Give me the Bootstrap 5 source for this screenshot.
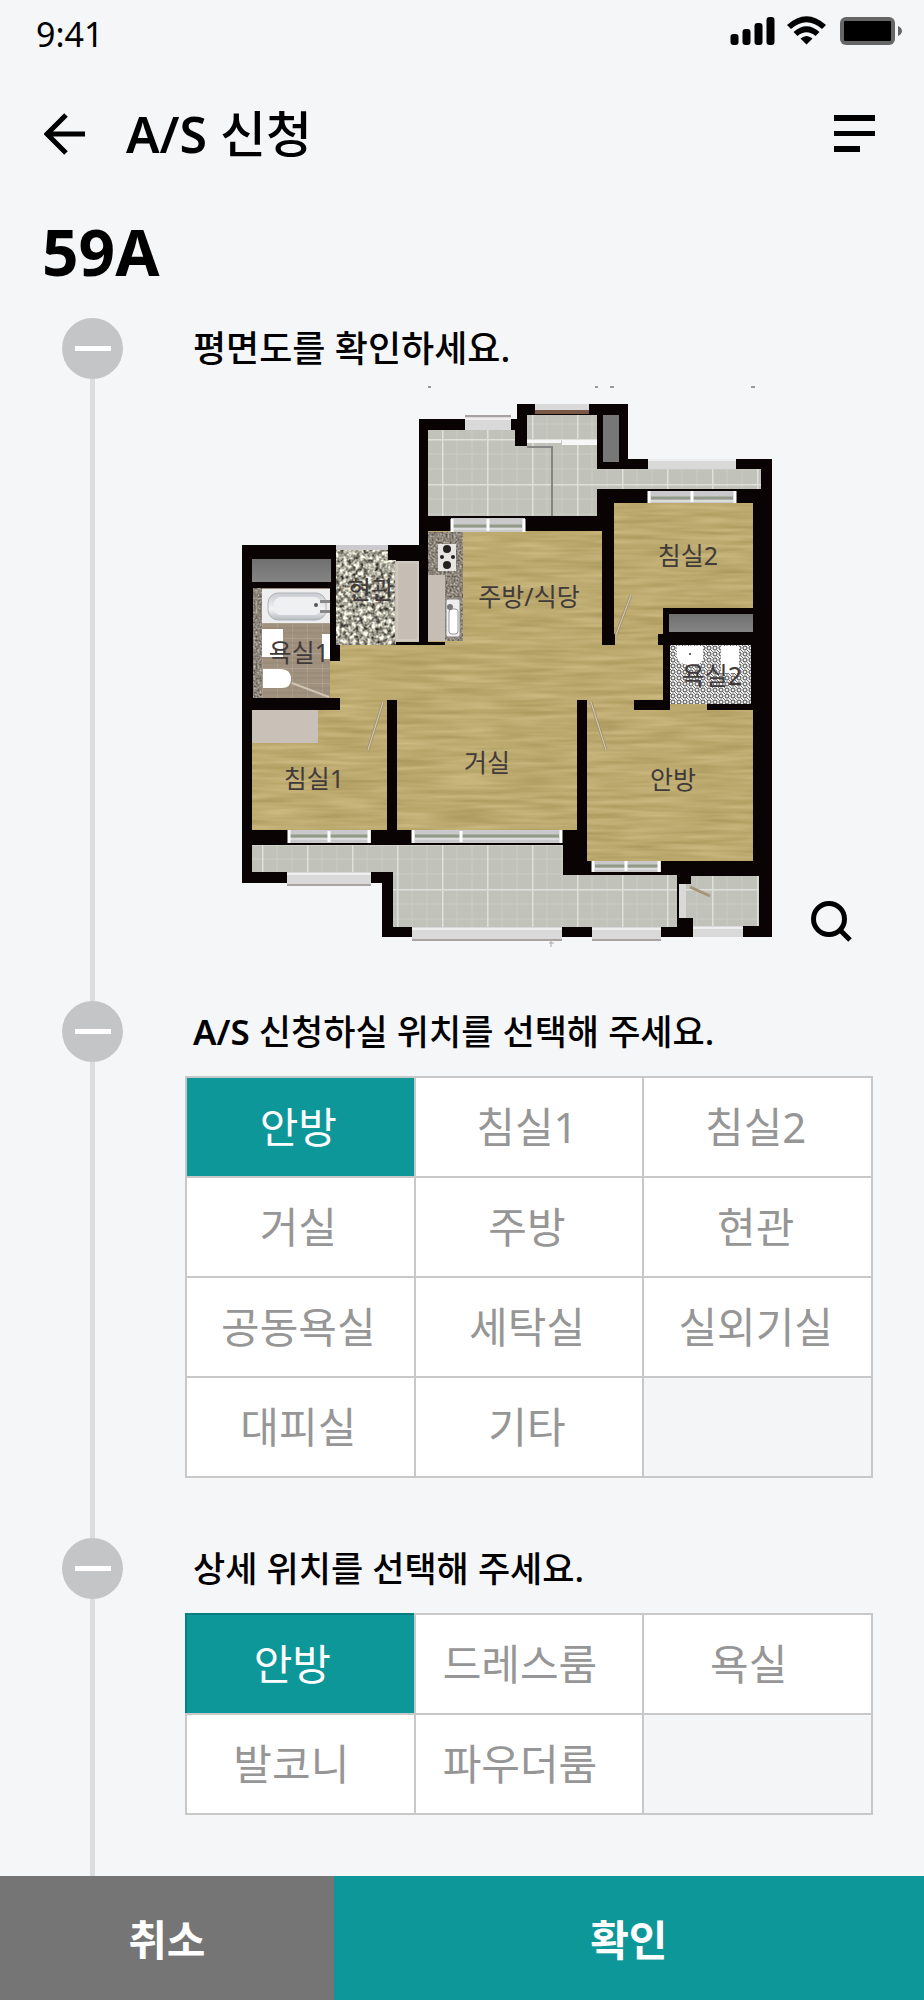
<!DOCTYPE html>
<html lang="ko">
<head>
<meta charset="utf-8">
<meta name="viewport" content="width=device-width, initial-scale=1">
<title>A/S 신청</title>
<link href="https://cdn.jsdelivr.net/npm/bootstrap@5.3.0/dist/css/bootstrap.min.css" rel="stylesheet">
<style>
  :root { --teal: #0e9799; --line: #c8c8c8; --page: #f5f6f8; }
  body { background: var(--page); color: #000; font-family: "Noto Sans", "Noto Sans CJK KR", sans-serif; }
  svg { display: block; }
  .status-bar { height: 68px; padding: 0 22px 0 36px; font-size: 34px; line-height: 68px; }
  .app-header { height: 132px; padding: 0 49px 0 44px; }
  .app-title { margin-left: 41px; font-size: 50px; line-height: 60px; font-weight: 500; }
  .icon-btn { padding: 0; border: 0; background: none; color: #000; }
  .unit-type { padding: 18px 42px 0; margin-bottom: 32px; font-size: 64px; line-height: 68px; font-weight: 700; }
  .steps { padding: 0 51px 0 62px; }
  .step-row { gap: 62px; }
  .step-toggle { width: 61px; height: 61px; border: 0; padding: 0; border-radius: 50%; background: #c4c5c7; }
  .step-toggle span { width: 36px; height: 5px; background: #fff; }
  .step-line { width: 5px; background: #dcdddf; }
  .step-content { min-width: 0; padding-bottom: 60px; }
  .step-title { height: 61px; padding-left: 8px; font-size: 36px; line-height: 61px; font-weight: 500; }
  .choice-title { font-size: 35px; }
  .plan-box { margin-bottom: -21px; }
  .zoom-btn { right: 21px; bottom: 20px; }
  .choices { display: grid; grid-template-columns: repeat(3, 1fr); gap: 2px; padding: 2px; margin-top: 14px; background: var(--line); }
  .choice { height: 98px; padding-right: 4px; background: #fff; color: #969696; font-size: 42px; line-height: 60px; cursor: pointer; }
  .choice-empty { background: #f4f5f7; }
  .btn-check:checked + .choice { background: var(--teal); color: #fff; }
  .btn-check:focus-visible + .choice { box-shadow: inset 0 0 0 4px #076a6c; }
  .choices-detail .choice { padding-right: 18px; }
  .choices-detail .btn-check:checked + .choice { margin: -2px 0 0 -2px; padding-right: 16px; height: 100px; border: solid #087e80; border-width: 2px 0 0 2px; }
  .action-bar button { height: 124px; border: 0; padding: 4px 0 0; color: #fff; font-size: 42px; line-height: 60px; font-weight: 700; }
  .cancel-btn { flex: 13 1 0; background: #757575; }
  .confirm-btn { flex: 23 1 0; background: var(--teal); }
  .room-name { font-size: 25px; fill: #403a3a; text-anchor: middle; }
</style>
</head>
<body>
<div class="min-vh-100 d-flex flex-column">
  <div class="status-bar d-flex justify-content-between">
    <span>9:41</span>
    <svg class="mt-3" width="172" height="30" viewBox="730 16 172 30" aria-hidden="true">
      <rect x="730.500" y="34" width="8" height="11" rx="3"/><rect x="742.500" y="29" width="8" height="16" rx="3"/><rect x="754.500" y="23" width="8" height="22" rx="3"/><rect x="766.500" y="17" width="8" height="28" rx="3"/>
      <path d="M787 25Q806.500 7.500 826 25L822 29Q806.500 15.500 791 29ZM793.500 32Q806.500 20.500 819.500 32L815.500 36Q806.500 28.500 797.500 36ZM800.500 38.500Q806.500 33.500 812.500 38.500L806.500 44.500Z"/>
      <rect x="840" y="17" width="55" height="28" rx="6" fill="#666"/><rect x="844" y="21" width="47" height="20" rx="1"/><path d="M898 26q4 2 4 5t-4 5z" fill="#666"/>
    </svg>
  </div>

  <header class="app-header d-flex align-items-center">
    <button class="icon-btn" type="button" aria-label="뒤로">
      <svg width="41" height="42" viewBox="0 0 41 42" fill="none" stroke="#000" stroke-width="5"><path d="M22 2 3 21 22 40M3 21H41"/></svg>
    </button>
    <h1 class="app-title mb-0"><span class="fw-semibold">A/S</span> 신청</h1>
    <button class="icon-btn ms-auto" type="button" aria-label="메뉴">
      <svg width="41" height="38" viewBox="0 0 41 38"><path d="M0 0h41v6H0zM0 16h41v5H0zM0 31h26v6H0z"/></svg>
    </button>
  </header>

  <main class="flex-grow-1 d-flex flex-column">
    <h2 class="unit-type">59A</h2>
    <div class="steps flex-grow-1 d-flex flex-column">

      <section class="step-row d-flex">
        <div class="d-flex flex-column align-items-center">
          <button class="step-toggle d-flex align-items-center justify-content-center flex-shrink-0" type="button" aria-label="접기"><span></span></button>
          <div class="step-line flex-grow-1"></div>
        </div>
        <div class="step-content flex-grow-1">
          <h3 class="step-title mb-0">평면도를 확인하세요.</h3>
          <div class="plan-box position-relative">
            <svg width="100%" viewBox="185 379 688 583" role="img" aria-label="59A 평면도">
              <defs>
                <filter id="wood" x="0" y="0" width="1" height="1" color-interpolation-filters="sRGB">
                  <feTurbulence type="fractalNoise" baseFrequency=".016 .2" numOctaves="2" seed="4"/>
                  <feColorMatrix values=".18 0 0 0 .65  .18 0 0 0 .575  .2 0 0 0 .335  0 0 0 0 1"/>
                </filter>
                <filter id="granite" x="0" y="0" width="1" height="1" color-interpolation-filters="sRGB">
                  <feTurbulence type="fractalNoise" baseFrequency=".25" numOctaves="2" seed="8"/>
                  <feColorMatrix values="1.6 0 0 0 -.14  1.6 0 0 0 -.15  1.5 0 0 0 -.15  0 0 0 0 1"/>
                </filter>
                <filter id="counter" x="0" y="0" width="1" height="1" color-interpolation-filters="sRGB">
                  <feTurbulence type="fractalNoise" baseFrequency=".5" numOctaves="2" seed="3"/>
                  <feColorMatrix values=".7 0 0 0 .2  .7 0 0 0 .17  .7 0 0 0 .13  0 0 0 0 1"/>
                </filter>
                <clipPath id="wood-rooms">
                  <path d="M252 710H340V645H428V531H602V645H614V503H753V608H663V700H634V710H670V704H707V710H753V861H587V700H577V830H397V700H387V830H252ZM329 661H341V698H329ZM340 698H384V711H340ZM591 698H634V711H591Z"/>
                </clipPath>
                <pattern id="tile" x="442" y="439" width="45" height="45" patternUnits="userSpaceOnUse">
                  <rect width="45" height="45" fill="#c1c3ba"/>
                  <path d="M15 0V45M30 0V45M0 15H45M0 30H45" stroke="#cbcdc5"/>
                  <path d="M.5 0V45M0 .5H45" stroke="#dfe0db" stroke-width="2"/>
                </pattern>
                <pattern id="mosaic" x="670" y="645" width="6" height="6" patternUnits="userSpaceOnUse">
                  <rect width="6" height="6" fill="#eee"/><circle cx="3" cy="3" r="2" fill="none" stroke="#444" stroke-width="1"/><circle r="1" fill="#444"/><circle cx="6" cy="6" r="1" fill="#444"/>
                </pattern>
                <pattern id="bathfloor" x="262" y="623" width="15" height="15" patternUnits="userSpaceOnUse">
                  <rect width="15" height="15" fill="#a0917f"/><path d="M0 0H15M0 0V15" stroke="#b8ab9c"/><path d="M0 5H15M0 10H15" stroke="#978775"/>
                </pattern>
                <linearGradient id="shaft" x2="0" y2="1"><stop stop-color="#707070"/><stop offset="1" stop-color="#858585"/></linearGradient>
                <linearGradient id="tub" x2="0" y2="1"><stop stop-color="#c7cbd0"/><stop offset=".6" stop-color="#f2f4f6"/><stop offset="1" stop-color="#b5babf"/></linearGradient>
              </defs>
              <path d="M428 386h3v2h-3zM595 386h3v2h-3zM610 386h4v2h-4zM751 386h4v2h-4z" fill="#999"/>
              <!-- outer walls -->
              <path d="M242 545H419V419H517V404H628V459H772V937H382V883H242Z" fill="#090303"/>
              <!-- wooden floors -->
              <g clip-path="url(#wood-rooms)"><rect x="242" y="490" width="520" height="380" filter="url(#wood)"/></g>
              <path d="M602 489H613V634H615V645H602ZM419 531H428V645H419ZM397 642H445V645H397ZM658 634H664V645H658Z" fill="#090303"/>
              <path d="M564 830H578V862H564Z" fill="#090303"/>
              <!-- tiled floors -->
              <g fill="url(#tile)">
                <path d="M428 430H515V446H527V415H597V469H761V489H597V516H428Z"/>
                <path d="M252 845H563V875H677V927H393V872H252ZM686 876H759V926H686Z"/>
              </g>
              <path d="M597 404H628V469H597Z" fill="#090303"/>
              <path d="M552 446V516" stroke="#85877f" stroke-width="2"/><path d="M527 447H551" stroke="#888" stroke-width="2"/>
              <path d="M527 440H562V445H597V440H561V443H527Z" fill="#f7f7f7"/>
              <!-- shafts -->
              <path d="M252 559H331V582H252Z" fill="url(#shaft)"/><path d="M603 415H619V462H603Z" fill="#777"/><path d="M669 614H753V632H669Z" fill="url(#shaft)"/>
              <!-- entrance -->
              <path d="M336 550H396V645H336Z" filter="url(#granite)"/>
              <path d="M336 545H388V550H336Z" fill="#c9c9ce"/><path d="M388 545H419V560H388Z" fill="#090303"/>
              <path d="M395 561H419V642H395Z" fill="#c6beb4"/><path d="M397 562H418V640H397Z" fill="none" stroke="#d9d3c9"/>
              <!-- bathroom 1 -->
              <path d="M253 588H330V698H253Z" fill="url(#bathfloor)"/>
              <path d="M253 588H262V698H253Z" filter="url(#counter)"/>
              <path d="M262 589H330V623H262Z" fill="#eee"/><rect x="268" y="593" width="58" height="27" rx="10" fill="url(#tub)" stroke="#aeb3b8"/><rect x="274" y="597" width="47" height="18" rx="7" fill="#eef0f2"/><circle cx="316" cy="605" r="2" fill="#555"/><path d="M320 600h10v3h-10zM320 610h10v3h-10z" fill="#888"/>
              <path d="M262 629H283V657H262ZM322 634H330V659H322Z" fill="#fff"/><path d="M263 669H280Q291 669 291 679T280 688H263Z" fill="#fff"/><path d="M292 683 329 697" stroke="#d0c4b3" stroke-width="2"/>
              <!-- kitchen -->
              <path d="M428 532H463V641H428Z" filter="url(#counter)"/>
              <path d="M438 544H456V571H438Z" fill="#e7e4e2"/><g fill="#252020"><circle cx="447" cy="549" r="4"/><circle cx="447" cy="565" r="4"/><circle cx="442" cy="557" r="2"/><circle cx="453" cy="557" r="2"/></g>
              <path d="M428 575H445V641H428Z" fill="#c6beb4"/><rect x="446" y="599" width="14" height="38" rx="2" fill="#eee" stroke="#8b8580"/><rect x="449" y="609" width="9" height="25" rx="3" fill="#fff" stroke="#999"/><circle cx="450" cy="607" r="3" fill="#777"/>
              <!-- bathroom 2 -->
              <path d="M670 645H751V704H670Z" fill="url(#mosaic)"/><path d="M677 646H703V659Q701 665 690 665T677 658ZM721 646H739V673H721Z" fill="#fff"/><circle cx="690" cy="654" r="1" fill="#333"/>
              <path d="M252 710H318V743H252Z" fill="#c9c0b8"/>
              <!-- windows -->
              <g fill="#d9d9d9">
                <path d="M465 415H511V430H465ZM535 404H589V410H535ZM648 459H736V469H648Z"/>
                <path d="M287 872H371V886H287ZM412 927H562V941H412ZM592 927H661V941H592ZM693 926H743V937H693ZM679 884H686V918H679Z"/>
              </g>
              <path d="M465 416H511M287 885H371M412 940H562M592 940H661" stroke="#a8a2a0" stroke-width="2"/>
              <path d="M465 419H511M287 874H371M412 929H562M592 929H661M693 928H743M648 460H736" stroke="#eee" stroke-width="2"/>
              <path d="M535 410H589V414H535Z" fill="#795846"/>
              <path d="M677 875H691V884H677ZM677 918H693V937H677Z" fill="#090303"/>
              <path d="M451 518H525V532H451ZM648 491H736V503H648ZM288 830H371V843H288ZM412 830H562V843H412ZM592 861H661V872H592Z" fill="#c9c9cb"/>
              <path d="M453 526H522M651 498H733M290 836H368M415 836H559M595 866H658" stroke="#929a88" stroke-width="3"/>
              <path d="M453 529H522M651 501H733M290 839H368M415 839H559M595 869H658" stroke="#eee"/>
              <path d="M452 519V532M488 519V531M524 519V532M649 491V503M692 491V502M735 491V503M289 830V843M329 831V842M369 830V843M413 830V843M461 831V842M561 830V843M593 861V872M626 861V871M659 861V872" stroke="#fff" stroke-width="3"/>
              <!-- doors -->
              <path d="M631 595 616 635M383 702 368 750M591 702 606 750M690 887 710 896" stroke="#a39575" stroke-width="3"/>
              <path d="M631 595 616 635M383 702 368 750M591 702 606 750" stroke="#d8ccb2"/>
              <path d="M551 941V947M549 943H554" stroke="#aaa"/>
              <g class="room-name">
                <text x="688" y="565">침실2</text><text x="529" y="606">주방/식당</text><text x="371" y="599">현관</text><text x="299" y="662">욕실1</text>
                <text x="314" y="788">침실1</text><text x="487" y="772">거실</text><text x="673" y="789">안방</text><text x="712" y="685">욕실2</text>
              </g>
            </svg>
            <button class="icon-btn zoom-btn position-absolute" type="button" aria-label="평면도 확대">
              <svg width="41" height="41" viewBox="0 0 41 41" fill="none" stroke="#000" stroke-width="5"><circle cx="18" cy="18" r="15.500"/><path d="M28 28 39 39"/></svg>
            </button>
          </div>
        </div>
      </section>

      <section class="step-row d-flex">
        <div class="d-flex flex-column align-items-center">
          <button class="step-toggle d-flex align-items-center justify-content-center flex-shrink-0" type="button" aria-label="접기"><span></span></button>
          <div class="step-line flex-grow-1"></div>
        </div>
        <div class="step-content flex-grow-1">
          <h3 class="step-title choice-title mb-0"><span class="fw-semibold">A/S</span> 신청하실 위치를 선택해 주세요.</h3>
          <div class="choices" role="radiogroup" aria-label="위치">
            <input class="btn-check" type="radio" name="room" id="room1" checked><label class="choice d-flex align-items-center justify-content-center" for="room1">안방</label>
            <input class="btn-check" type="radio" name="room" id="room2"><label class="choice d-flex align-items-center justify-content-center" for="room2">침실1</label>
            <input class="btn-check" type="radio" name="room" id="room3"><label class="choice d-flex align-items-center justify-content-center" for="room3">침실2</label>
            <input class="btn-check" type="radio" name="room" id="room4"><label class="choice d-flex align-items-center justify-content-center" for="room4">거실</label>
            <input class="btn-check" type="radio" name="room" id="room5"><label class="choice d-flex align-items-center justify-content-center" for="room5">주방</label>
            <input class="btn-check" type="radio" name="room" id="room6"><label class="choice d-flex align-items-center justify-content-center" for="room6">현관</label>
            <input class="btn-check" type="radio" name="room" id="room7"><label class="choice d-flex align-items-center justify-content-center" for="room7">공동욕실</label>
            <input class="btn-check" type="radio" name="room" id="room8"><label class="choice d-flex align-items-center justify-content-center" for="room8">세탁실</label>
            <input class="btn-check" type="radio" name="room" id="room9"><label class="choice d-flex align-items-center justify-content-center" for="room9">실외기실</label>
            <input class="btn-check" type="radio" name="room" id="room10"><label class="choice d-flex align-items-center justify-content-center" for="room10">대피실</label>
            <input class="btn-check" type="radio" name="room" id="room11"><label class="choice d-flex align-items-center justify-content-center" for="room11">기타</label>
            <div class="choice-empty"></div>
          </div>
        </div>
      </section>

      <section class="step-row d-flex flex-grow-1">
        <div class="d-flex flex-column align-items-center">
          <button class="step-toggle d-flex align-items-center justify-content-center flex-shrink-0" type="button" aria-label="접기"><span></span></button>
          <div class="step-line flex-grow-1"></div>
        </div>
        <div class="step-content flex-grow-1">
          <h3 class="step-title choice-title mb-0">상세 위치를 선택해 주세요.</h3>
          <div class="choices choices-detail" role="radiogroup" aria-label="상세 위치">
            <input class="btn-check" type="radio" name="detail" id="detail1" checked><label class="choice d-flex align-items-center justify-content-center" for="detail1">안방</label>
            <input class="btn-check" type="radio" name="detail" id="detail2"><label class="choice d-flex align-items-center justify-content-center" for="detail2">드레스룸</label>
            <input class="btn-check" type="radio" name="detail" id="detail3"><label class="choice d-flex align-items-center justify-content-center" for="detail3">욕실</label>
            <input class="btn-check" type="radio" name="detail" id="detail4"><label class="choice d-flex align-items-center justify-content-center" for="detail4">발코니</label>
            <input class="btn-check" type="radio" name="detail" id="detail5"><label class="choice d-flex align-items-center justify-content-center" for="detail5">파우더룸</label>
            <div class="choice-empty"></div>
          </div>
        </div>
      </section>
    </div>
  </main>

  <footer class="action-bar d-flex">
    <button class="cancel-btn" type="button">취소</button>
    <button class="confirm-btn" type="button">확인</button>
  </footer>
</div>
<script src="https://cdn.jsdelivr.net/npm/bootstrap@5.3.0/dist/js/bootstrap.bundle.min.js"></script>
</body>
</html>
